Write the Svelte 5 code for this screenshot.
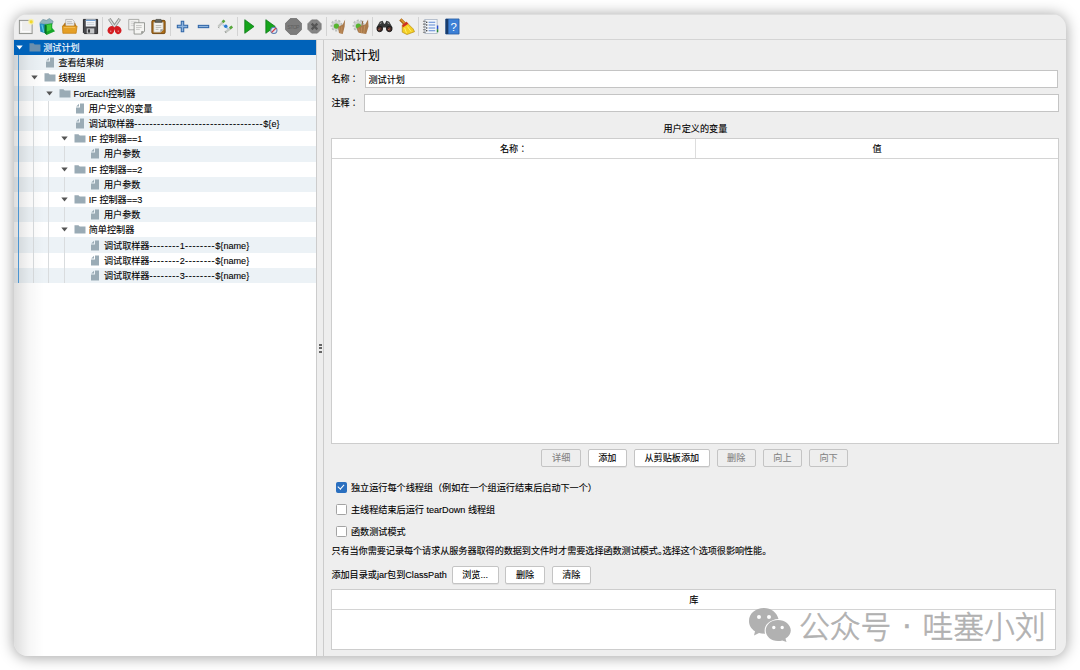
<script>
	const dashes = '-'.repeat(8);

	const tree = [
		{ depth: 0, folder: true, text: ['测试计划'] },
		{ depth: 1, text: ['查看结果树'] },
		{ depth: 1, folder: true, text: ['线程组'] },
		{ depth: 2, folder: true, text: ['ForEach控制器'] },
		{ depth: 3, text: ['用户定义的变量'] },
		{ depth: 3, text: ['调试取样器', '-'.repeat(34), '${e}'] },
		{ depth: 3, folder: true, text: ['IF 控制器==1'] },
		{ depth: 4, text: ['用户参数'] },
		{ depth: 3, folder: true, text: ['IF 控制器==2'] },
		{ depth: 4, text: ['用户参数'] },
		{ depth: 3, folder: true, text: ['IF 控制器==3'] },
		{ depth: 4, text: ['用户参数'] },
		{ depth: 3, folder: true, text: ['简单控制器'] },
		{ depth: 4, text: ['调试取样器', dashes, '1', dashes, '${name}'] },
		{ depth: 4, text: ['调试取样器', dashes, '2', dashes, '${name}'] },
		{ depth: 4, text: ['调试取样器', dashes, '3', dashes, '${name}'] }
	];

	const toolbar = [
		['new', 'templates', 'open', 'save'],
		['cut', 'copy', 'paste'],
		['plus', 'minus', 'toggle'],
		['start', 'startNoTimers', 'stop', 'shutdown'],
		['clear', 'clearAll'],
		['search', 'reset'],
		['functions', 'help']
	];

	const variableButtons = [
		{ label: '详细', disabled: true },
		{ label: '添加' },
		{ label: '从剪贴板添加' },
		{ label: '删除', disabled: true },
		{ label: '向上', disabled: true },
		{ label: '向下', disabled: true }
	];

	let selected = $state(0);
	let name = $state('测试计划');
	let comment = $state('');
	let serialize = $state(true);
	let tearDown = $state(false);
	let functional = $state(false);
</script>

{#snippet gear()}
	<circle cx="7" cy="8" r="5.4" fill="none" stroke="#b9bcba" stroke-width="2" stroke-dasharray="2.2 1.6" />
	<circle cx="7" cy="8" r="4.9" fill="#cdd0ce" />
	<circle cx="6.8" cy="8.6" r="2.8" fill="#56b52f" />
{/snippet}

{#snippet icon(kind)}
	<svg class="icon" viewBox="0 0 18 18">
		{#if kind === 'new'}
			<rect x="2.5" y="2.5" width="13.5" height="14" fill="#eeeeec" stroke="#8d8f8a" />
			<path d="M4.5 4v10.5M5 14.5h9" stroke="#fff" fill="none" />
			<circle cx="15" cy="4" r="3.2" fill="#fbf2a0" opacity=".8" />
			<circle cx="15" cy="4" r="1.7" fill="#f3d92b" />
		{:else if kind === 'templates'}
			<path d="M1 5l3-3.5 4 1 3-2 4 3-1 3H3z" fill="#8fb3bd" stroke="#678a94" stroke-width=".6" />
			<path d="M.5 5.5l7 1.500v9.500l-6-2z" fill="#258ac0" />
			<path d="M3 7l2 8" stroke="#53c9df" stroke-width="1.3" />
			<path d="M6 7l8-1.500v5l3 3.500-9 4-2-2z" fill="#16a52a" />
			<path d="M8 7.500l5-1v6l-5 2z" fill="#43cf3b" />
			<path d="M6 7v9l2 1.500V8z" fill="#086d24" />
		{:else if kind === 'open'}
			<path d="M2 8l2-3h11l1 3v6H2z" fill="#b97619" />
			<path d="M5 1.500h7l2 2V9H5z" fill="#eee" stroke="#999" stroke-width=".6" />
			<path d="M6.500 4h5M6.500 6h6" stroke="#999" stroke-width=".7" />
			<path d="M1.500 8.500h15.500l-1 7.700H2z" fill="#e5a027" stroke="#c57f12" stroke-width=".8" />
			<path d="M3 10h12" stroke="#f3bd57" />
		{:else if kind === 'save'}
			<path d="M1.500 1.500h15v15h-14l-1-1z" fill="#48494d" stroke="#252629" />
			<rect x="4" y="1.5" width="10.5" height="7.5" fill="#f5f7fa" />
			<path d="M4 2.500h10.500" stroke="#729fcf" stroke-width="1.5" />
			<path d="M5 5h8M5 7h8" stroke="#b4bac1" stroke-width=".7" />
			<rect x="5" y="11" width="8" height="5.5" fill="#c4c6c8" />
			<rect x="6.3" y="12" width="2.2" height="3.5" fill="#36383b" />
		{:else if kind === 'cut'}
			<path d="M3.500 1l7 10M14.500 1L7.500 11" stroke="#8c908e" stroke-width="3.2" />
			<path d="M3.800 1.500l6 9M14.200 1.500L8 10.500" stroke="#d9dcda" stroke-width="1.5" />
			<path d="M8 10.500c-2-2-5 0-5.300 2.300S5 17 6.500 15.500 7.700 12.500 8 10.500zM10 10.500c2-2 5 0 5.300 2.300s-2.300 4.200-3.800 2.700-1.200-3-1.500-5z" fill="#d41d22" stroke="#d41d22" stroke-width="2.2" />
			<path d="M5 13.500v.8M13 13.500v.8" stroke="#eee" stroke-width="1.2" />
		{:else if kind === 'copy'}
			<path d="M.8 1.500h10.700v11H.8z" fill="#f1f1ef" stroke="#a0a29e" stroke-width=".9" />
			<path d="M3 4h6M3 6h6M3 8h4" stroke="#ccc" stroke-width=".8" />
			<path d="M6.500 5h11v9l-3 3h-8z" fill="#f5f5f3" stroke="#888a85" stroke-width=".9" />
			<path d="M8.500 8h6M8.500 10h6M8.500 12h4" stroke="#b8b9b6" stroke-width=".8" />
			<path d="M14 17v-3h3z" fill="#888a85" />
		{:else if kind === 'paste'}
			<rect x="2" y="2.5" width="14" height="14" rx="1.2" fill="#ad6d19" stroke="#71450d" />
			<path d="M4 4.500h10v8l-2.500 2.500H4z" fill="#f2f2ef" stroke="#a7a79d" stroke-width=".6" />
			<path d="M6 8h6M6 10h6M6 12h3" stroke="#b0b1ae" stroke-width=".9" />
			<path d="M5.500 2.500l1-1h5l1 1v2h-7z" fill="#656761" stroke="#3f413d" stroke-width=".7" />
			<path d="M11 15v-3h3z" fill="#969792" />
		{:else if kind === 'plus'}
			<path d="M7.700 3.500h2.600v4.200h4.200v2.600h-4.200v4.200H7.700v-4.200H3.500V7.700h4.200z" fill="#8fb5de" stroke="#2f65a7" stroke-width="1.1" />
		{:else if kind === 'minus'}
			<rect x="3.5" y="7.8" width="11" height="2.4" fill="#8fb5de" stroke="#2f65a7" stroke-width="1.1" />
		{:else if kind === 'toggle'}
			<path d="M1.500 9l6-6M9 15l6.500-5" stroke="#c3c7c2" stroke-width="2.5" />
			<path d="M5.800 4.500l2.200-2M13.500 11l2.700-2" stroke="#58a83c" stroke-width="2.7" />
			<path d="M6 7l6 4.500" stroke="#a6c7e9" stroke-width="1.5" />
			<circle cx="9.3" cy="8.8" r="1.8" fill="#2b7ad1" />
			<path d="M1 9.500l1.500 1M9.500 16l-1-2" stroke="#909590" />
		{:else if kind === 'start'}
			<path d="M4 1.800L13.800 9 4 16.200z" fill="#15a51b" stroke="#087514" stroke-width=".8" />
		{:else if kind === 'startNoTimers'}
			<path d="M3 1.800L13 9l-10 7.200z" fill="#15a51b" stroke="#087514" stroke-width=".8" />
			<circle cx="11.5" cy="13" r="3.3" fill="#dce6f3" stroke="#5a7eb1" stroke-width="1.1" />
			<path d="M9.200 15.200l4.600-4.600" stroke="#d33c43" stroke-width="1.4" />
		{:else if kind === 'stop'}
			<path d="M5.600 .6h6.800l5 5v6.800l-5 5H5.600l-5-5V5.600z" fill="#7c7c7c" stroke="#696969" stroke-width=".8" />
			<text x="9" y="11.2" text-anchor="middle" font-size="5.6" fill="#5f5f5f" textLength="13">STOP</text>
		{:else if kind === 'shutdown'}
			<path d="M6 2h6l4 4v6l-4 4H6l-4-4V6z" fill="#858585" stroke="#727272" stroke-width=".8" />
			<path d="M6 6l6 6M12 6l-6 6" stroke="#555" stroke-width="2.4" />
		{:else if kind === 'clear'}
			{@render gear()}
			<path d="M16 1.500L13.500 7l-5 2.500 1 6.500 4 1L15.500 9z" fill="#a9794a" />
			<path d="M10 10l1 6M12.500 9v7" stroke="#c0905c" />
		{:else if kind === 'clearAll'}
			{@render gear()}
			<path d="M17 1.500L14 7l-4 1-5 3 2 4.500 8 1.500 2.500-8z" fill="#a9794a" />
			<path d="M7 11l1.500 4M10 10v6M13.500 8l-1 8" stroke="#c0905c" />
			<path d="M11.500 3l-1 5" stroke="#80572f" />
		{:else if kind === 'search'}
			<path d="M4 4l3-1 1.500 3h1L11 3l3 1 3.500 6-2 4-4-1-1-3H7.500l-1 3-4 1-2-4z" fill="#353737" />
			<path d="M4 6l2-1M12 5l2 1" stroke="#aaa" />
			<circle cx="3.9" cy="11.6" r="2.9" fill="#4a302b" stroke="#191b1b" />
			<circle cx="14.1" cy="11.6" r="2.9" fill="#4a302b" stroke="#191b1b" />
			<path d="M2.500 12.400l2-1M12.800 12.400l2-1" stroke="#bb654b" />
		{:else if kind === 'reset'}
			<path d="M2.500 1.500L7 6" stroke="#a76515" stroke-width="3.3" />
			<path d="M3 1.500L7 5.500" stroke="#e49d35" stroke-width="1.3" />
			<path d="M4.500 7.500l4.500-3 7 7 1.500 3-8 3-5-2.500z" fill="#f4cf23" stroke="#bd941b" stroke-width=".8" />
			<path d="M4.500 7.500l4.500-3.500 2 2-6 4z" fill="#cf2f25" />
			<path d="M7 10.500l2 5.500M10 9l4 5.500" stroke="#fff073" />
		{:else if kind === 'functions'}
			<rect x="3" y="1.5" width="13" height="15" fill="#f2f6fb" stroke="#a5b1c0" stroke-width=".8" />
			<path d="M7 4.500h7M7 7.500h7M7 10.500h7M7 13.500h7" stroke="#5b87d3" stroke-width="1.1" />
			<path d="M1 3.500h3M1 6.500h3M1 9.500h3M1 12.500h3M1 15h3" stroke="#777" stroke-width="1.1" />
			<circle cx="5" cy="4.5" r=".8" fill="#333" />
			<circle cx="5" cy="7.5" r=".8" fill="#333" />
			<circle cx="5" cy="10.5" r=".8" fill="#333" />
			<circle cx="5" cy="13.5" r=".8" fill="#333" />
			<path d="M16.500 8v4" stroke="#294fd0" stroke-width="1.5" />
			<path d="M16.500 12v3" stroke="#268b30" stroke-width="1.5" />
		{:else}
			<path d="M3 1h14v16H3z" fill="#3c80d6" stroke="#275a9f" stroke-width=".8" />
			<path d="M2.700 1h3v16h-3z" fill="#193c6b" />
			<text x="11.3" y="13.3" text-anchor="middle" font-size="12" fill="#fff">?</text>
		{/if}
	</svg>
{/snippet}

<div class="window">
	<div class="toolbar">
		{#each toolbar as group, i}
			{#if i > 0}<span class="separator"></span>{/if}
			{#each group as kind}
				<span class="tool">{@render icon(kind)}</span>
			{/each}
		{/each}
	</div>

	<div class="body">
		<div class="tree">
			{#each tree as row, i}
				<div class="row" class:selected={selected === i} role="presentation" onclick={() => (selected = i)}>
					{#each { length: row.depth } as _, level}
						<span class="indent" class:root={level === 0}></span>
					{/each}
					<span class="arrow">
						{#if row.folder}
							<svg viewBox="0 0 7 5"><path d="M.3.4h6.400L3.500 4.600z" /></svg>
						{/if}
					</span>
					<svg class="node" viewBox="0 0 12 10">
						{#if row.folder}
							<path d="M.5.7h4l1.200 1.400h5.800V9H.5z" />
						{:else}
							<path d="M6 0h4v10H2V4h4z" />
							<path d="M5 .3V3H2.200z" />
						{/if}
					</svg>
					<span class="text"
						>{#each row.text as part}<span class:dash={part[0] === '-'}>{part}</span>{/each}</span
					>
				</div>
			{/each}
		</div>

		<div class="splitter"><i></i><i></i><i></i></div>

		<div class="panel">
			<h1>测试计划</h1>
			<label class="field name"><span>名称：</span><input bind:value={name} /></label>
			<label class="field"><span>注释：</span><input bind:value={comment} /></label>

			<div class="caption">用户定义的变量</div>
			<div class="table variables">
				<div class="head"><span class="colon">名称：</span><span>值</span></div>
			</div>
			<div class="buttons">
				{#each variableButtons as { label, disabled }}
					<button {disabled}>{label}</button>
				{/each}
			</div>

			<div class="checks">
				<label><input type="checkbox" bind:checked={serialize} />独立运行每个线程组（例如在一个组运行结束后启动下一个）</label>
				<label><input type="checkbox" bind:checked={tearDown} />主线程结束后运行 tearDown 线程组</label>
				<label><input type="checkbox" bind:checked={functional} />函数测试模式</label>
			</div>
			<p>只有当你需要记录每个请求从服务器取得的数据到文件时才需要选择函数测试模式。选择这个选项很影响性能。</p>

			<div class="classpath">
				<span>添加目录或jar包到ClassPath</span>
				<button class="browse">浏览...</button>
				<button>删除</button>
				<button>清除</button>
			</div>
			<div class="table library">
				<div class="head"><span>库</span></div>
			</div>
		</div>
	</div>

	<div class="watermark">
		<svg viewBox="0 0 42 34">
			<path
				fill-rule="evenodd"
				d="M15 0C6.500 0 0 5.500 0 13c0 4.500 2.400 8 6 10.300L5 27.500l5-2.500c2 .6 4 .8 6 .7C14 18 20 11.500 29.500 11 28 4.500 22 0 15 0zM10 7a2 2 0 1 1 0 4 2 2 0 0 1 0-4zm10 0a2 2 0 1 1 0 4 2 2 0 0 1 0-4z"
			/>
			<path
				fill-rule="evenodd"
				d="M29 12c-7 0-12.300 4.700-12.300 10.500S22 33 29 33c1.600 0 3-.2 4.300-.6L37.500 34l-1-3.400c3.200-2 5.300-4.800 5.300-8.100C41.800 16.700 36 12 29 12zm-4.200 5.800a1.700 1.700 0 1 1 0 3.400 1.700 1.700 0 0 1 0-3.400zm8.400 0a1.700 1.700 0 1 1 0 3.400 1.700 1.700 0 0 1 0-3.400z"
			/>
		</svg>
		<span>公众号</span><span class="dot">·</span><span>哇塞小刘</span>
	</div>
</div>

<style>
	:global(body) {
		background: #fff;
		overflow: hidden;
	}

	.window {
		position: relative;
		box-sizing: border-box;
		width: 1052px;
		height: 642px;
		margin: 14px;
		border-radius: 14px;
		background: #eee;
		box-shadow: 0 1px 14px 1px rgba(0, 0, 0, 0.34);
		overflow: hidden;
		display: flex;
		flex-direction: column;
		font-family: 'Liberation Sans', 'Noto Sans CJK SC', sans-serif;
		font-size: 9.12px;
		line-height: 14px;
		color: #000;
		-webkit-text-stroke: 0.1px;
	}

	.toolbar {
		display: flex;
		align-items: center;
		box-sizing: border-box;
		height: 26px;
		padding: 0 0 1px 1px;
		border-top: 1px solid #dedede;
		border-bottom: 1px solid #d4d4d4;
	}

	.tool {
		display: flex;
		justify-content: center;
		width: 21.65px;
	}

	.icon {
		width: 17px;
		height: 17px;
	}

	.separator {
		width: 1px;
		height: 19px;
		margin: 0 0.75px;
		background: #d3d3d3;
	}

	.body {
		display: flex;
		flex: 1;
		min-height: 0;
	}

	/* ----- TREE ----- */
	.tree {
		position: relative;
		width: 302px;
		background: #fff;
	}

	.tree::after {
		content: '';
		position: absolute;
		inset: 15px auto 0 0;
		width: 30px;
		background: linear-gradient(to right, rgba(0, 0, 0, 0.13), rgba(0, 0, 0, 0.035) 50%, transparent);
		pointer-events: none;
	}

	.row {
		display: flex;
		align-items: center;
		height: 15.2px;
		white-space: nowrap;
	}

	.row:nth-child(even) {
		background: #ecf2f6;
	}

	.row.selected {
		background: #0062b9;
		color: #fff;
	}

	.indent {
		box-sizing: border-box;
		width: 15.2px;
		height: 100%;
		flex: none;
		background: linear-gradient(#d9dcde, #d9dcde) 4px 0 / 1px 100% no-repeat;
	}

	.indent.root {
		background-image: linear-gradient(#54a6e8, #54a6e8);
	}

	.arrow {
		display: flex;
		width: 14.5px;
		padding-left: 1.5px;
		box-sizing: border-box;
	}

	.arrow svg {
		width: 7px;
		height: 5px;
		fill: #555;
	}

	.node {
		width: 12px;
		height: 11px;
		margin-right: 2.7px;
		fill: #9aabb5;
	}

	.text {
		padding-top: 1px;
	}

	.selected .arrow svg {
		fill: #fff;
	}

	.selected .node {
		fill: #6a8fad;
	}

	.dash {
		letter-spacing: 0.76px;
	}

	.splitter {
		display: flex;
		flex-direction: column;
		align-items: center;
		justify-content: center;
		gap: 1.5px;
		width: 8px;
		box-sizing: border-box;
		border-left: 1px solid #ccc;
		border-right: 1px solid #ccc;
	}

	.splitter i {
		width: 3px;
		height: 2px;
		background: #666;
	}

	/* ----- TEST PLAN PANEL ----- */
	.panel {
		flex: 1;
		padding: 6px 6px 0 7.4px;
	}

	h1 {
		margin: 0;
		font-size: 12.1px;
		line-height: 20px;
		font-weight: 400;
	}

	.field {
		display: flex;
		align-items: center;
		height: 18px;
		margin-bottom: 6px;
		padding-right: 1px;
		font-family: 'Liberation Sans', 'Noto Sans CJK TC', sans-serif;
	}

	.field.name {
		margin-top: 4px;
		padding-right: 2px;
	}

	.field span {
		width: 32.6px;
	}

	.field.name span {
		width: 33.6px;
	}

	.field input {
		flex: 1;
		box-sizing: border-box;
		height: 18px;
		padding: 0 2.5px 1px;
		border: 1px solid #c4c4c4;
		outline: none;
		background: #fff;
		font-size: inherit;
		font-family: 'Liberation Sans', 'Noto Sans CJK SC', sans-serif;
		-webkit-text-stroke: 0.1px;
	}

	.caption {
		width: 728px;
		margin-top: 10px;
		text-align: center;
	}

	.table {
		box-sizing: border-box;
		border: 1px solid #cdcdcd;
		background: #fff;
	}

	.variables {
		width: 728px;
		height: 306px;
		margin-top: 2px;
	}

	.head {
		display: flex;
		height: 19px;
		line-height: 21px;
		border-bottom: 1px solid #d4d4d4;
		text-align: center;
	}

	.head span {
		flex: 1;
	}

	.head span + span {
		border-left: 1px solid #ddd;
	}

	.colon {
		font-family: 'Liberation Sans', 'Noto Sans CJK TC', sans-serif;
	}

	.buttons {
		display: flex;
		justify-content: center;
		gap: 6.8px;
		width: 727px;
		margin-top: 5px;
	}

	button {
		box-sizing: border-box;
		height: 18px;
		padding: 0 9.6px;
		border: 1px solid #c4c4c4;
		border-radius: 2px;
		background: #fff;
		box-shadow: 0 1px 0 #e0e0e0;
		font: inherit;
		line-height: 15px;
		white-space: nowrap;
		color: #000;
	}

	button:disabled {
		background: #eee;
		box-shadow: none;
		color: #858585;
	}

	.checks {
		margin-top: 10px;
		padding-left: 4.6px;
	}

	.checks label {
		display: flex;
		align-items: center;
		height: 22px;
	}

	.checks input {
		appearance: none;
		box-sizing: border-box;
		width: 11px;
		height: 11px;
		margin: 0 4px 1px 0;
		border: 1px solid #a3a3a3;
		border-radius: 1.5px;
		background: #fff;
	}

	.checks input:checked {
		border-color: #2a6fbf;
		background: #2a6fbf;
	}

	.checks input:checked::after {
		content: '';
		display: block;
		width: 2.5px;
		height: 5px;
		margin: 0 0 0 2.5px;
		border: solid #fff;
		border-width: 0 1.5px 1.5px 0;
		transform: rotate(42deg);
	}

	p {
		margin: 1px 0 0;
		white-space: nowrap;
		font-feature-settings: 'halt';
		letter-spacing: -0.04px;
	}

	.classpath {
		display: flex;
		align-items: center;
		gap: 6.8px;
		height: 18px;
		margin-top: 8px;
	}

	.classpath .browse {
		margin-left: -2px;
		width: 47px;
	}

	.library {
		width: 725px;
		height: 61px;
		margin-top: 5px;
	}

	/* ----- WATERMARK ----- */
	.watermark {
		position: absolute;
		left: 735px;
		top: 589px;
		display: flex;
		align-items: center;
		height: 44px;
		color: #b1b1b1;
		font-family: 'Noto Sans CJK SC', sans-serif;
		font-size: 30.8px;
		font-weight: 300;
		white-space: nowrap;
		-webkit-text-stroke: 0.6px;
	}

	.watermark svg {
		width: 42px;
		height: 34px;
		margin-right: 8px;
		fill: #b1b1b1;
	}

	.dot {
		width: 31px;
		text-align: center;
		font-family: 'Liberation Sans', sans-serif;
	}
</style>
